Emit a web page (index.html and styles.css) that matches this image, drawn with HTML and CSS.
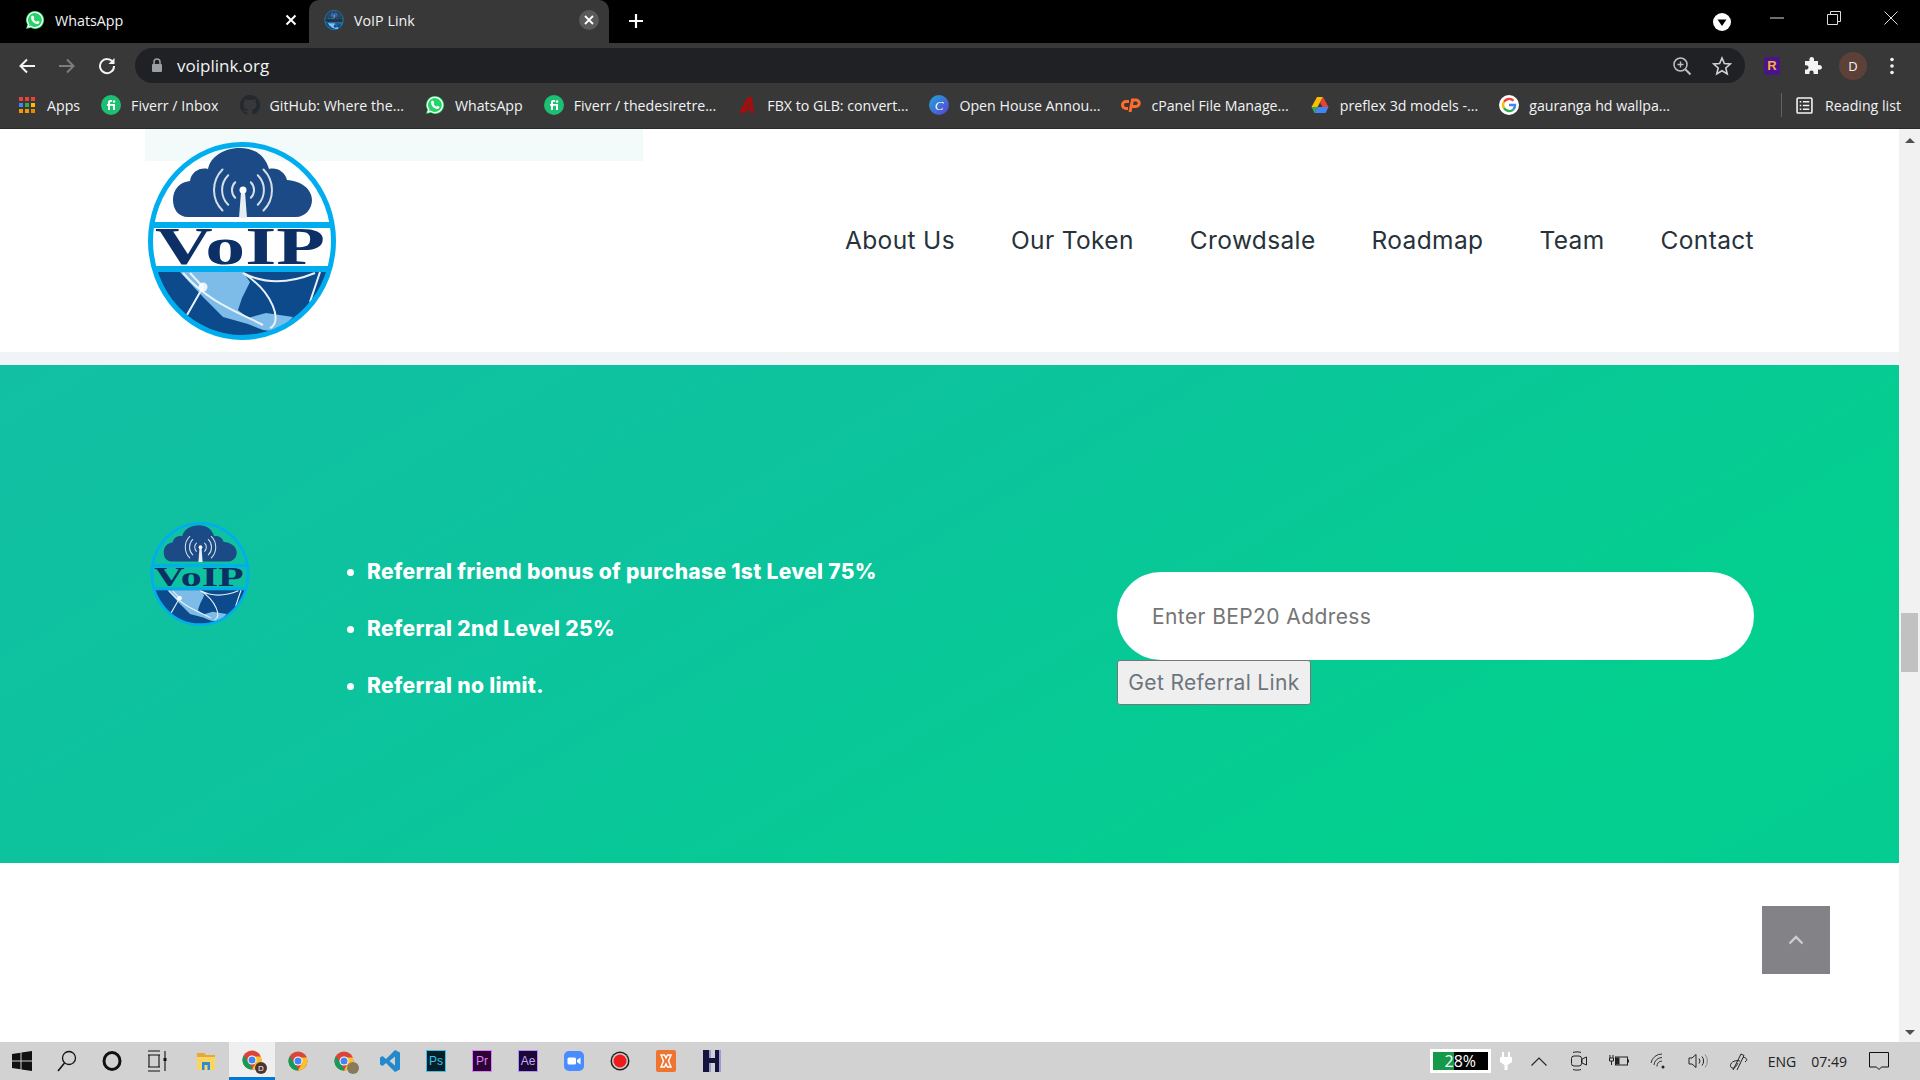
FILE: index.html
```html
<!DOCTYPE html>
<html lang="en">
<head>
  <meta charset="UTF-8">
  <title>VoIP Link</title>
  <link rel="stylesheet" href="styles.css">
</head>
<body>

<svg class="defs" width="0" height="0">
  <defs>
    <clipPath id="logoClip"><ellipse cx="94" cy="99" rx="92" ry="97"/></clipPath>
    <symbol id="logo" viewBox="0 0 188 198">
      <g clip-path="url(#logoClip)">
        <path fill="#1c4a86" d="M40 75C30 75 25 67 25 58C25 47 32 40 42 39C43 30 52 25 60 27C63 13 78 6 92 6C106 6 117 13 121 27C129 25 137 30 139 38C153 39 164 47 164 58C164 67 157 75 148 75Z"/>
        <g fill="none" stroke="#d5dfe9" stroke-width="2" stroke-linecap="round">
          <path d="M87.200 40.200A11 11 0 0 0 87.200 55.800M102.800 40.200A11 11 0 0 1 102.800 55.800"/>
          <path d="M80.200 33.200A21 21 0 0 0 80.200 62.800M109.800 33.200A21 21 0 0 1 109.800 62.800"/>
          <path d="M74.500 27.500A29 29 0 0 0 74.500 68.500M115.500 27.500A29 29 0 0 1 115.500 68.500"/>
        </g>
        <path fill="#e6edf3" d="M93 50L97 50L99 76L91 76Z"/>
        <circle cx="95" cy="48" r="3.500" fill="#fff"/>
        <rect x="0" y="80" width="188" height="6" fill="#00aeef"/>
        <text x="7" y="122" class="logo-text" textLength="170" lengthAdjust="spacingAndGlyphs">VoIP</text>
        <rect x="0" y="124" width="188" height="6" fill="#00aeef"/>
        <rect x="0" y="130" width="188" height="68" fill="#0c4a8c"/>
        <path fill="#7dbce8" d="M32 130L95 130L102 140L94 156L90 168L100 176L118 171L145 175L130 190L115 188L100 182L75 175L55 155Z"/>
        <g fill="none" stroke="#e8f1f8" stroke-width="2">
          <path d="M95 131C125 150 135 180 122 186M35 131C60 160 90 170 115 183M55 145L39 173M42 131L55 145M95 131C120 144 145 140 167 131M172 130L162 160"/>
        </g>
        <circle cx="55" cy="145" r="4.500" fill="#fff" opacity=".85"/>
      </g>
      <ellipse cx="94" cy="99" rx="91.500" ry="96.500" fill="none" stroke="#00aeef" stroke-width="5"/>
    </symbol>
    <symbol id="wa" viewBox="0 0 20 20">
      <path fill="#25d366" d="M10 1A9 9 0 0 0 2.300 14.600L1 19L5.600 17.800A9 9 0 1 0 10 1Z"/>
      <path fill="none" stroke="#fff" stroke-width="1.300" d="M10 2.400A7.600 7.600 0 0 0 3.800 14.400L3 17L5.700 16.300A7.600 7.600 0 1 0 10 2.400Z"/>
      <path fill="#fff" d="M7.300 5.600C6.500 5.800 5.900 6.800 6 8C6.300 10.800 9 13.600 12 14C13.200 14.100 14.200 13.400 14.400 12.500L14.400 11.700L12.500 10.800L11.600 11.800C10.400 11.300 9.200 10.200 8.600 9L9.300 8L8.500 5.900Z"/>
    </symbol>
    <symbol id="fi" viewBox="0 0 20 20">
      <circle cx="10" cy="10" r="10" fill="#1dbf73"/>
      <path fill="#fff" d="M6 9H7V7.500C7 5.800 8 5 9.500 5H11V6.800H10C9.300 6.800 9 7.100 9 7.700V9H14V15H12V10.800H9V15H7V10.800H6Z"/>
      <circle cx="13" cy="6.500" r="1.200" fill="#fff"/>
    </symbol>
    <symbol id="chrome" viewBox="0 0 20 20">
      <circle cx="10" cy="10" r="9.500" fill="#db4437"/>
      <path fill="#0f9d58" d="M10 19.500A9.500 9.500 0 0 1 1.800 5.200L7 13.500L11 19.500Z"/>
      <path fill="#fbc02d" d="M18.800 6.500A9.500 9.500 0 0 1 10 19.500L14 12L10 6.500Z"/>
      <circle cx="10" cy="10" r="4.500" fill="#fff"/>
      <circle cx="10" cy="10" r="3.500" fill="#4285f4"/>
    </symbol>
  </defs>
</svg>

<header class="chrome">
  <div class="tabstrip">
    <div class="tab">
      <svg class="favicon" width="20" height="20"><use href="#wa"/></svg>
      <span class="tab-title">WhatsApp</span>
      <svg class="tab-close" width="12" height="12" viewBox="0 0 12 12"><path d="M1.500 1.500L10.500 10.500M10.500 1.500L1.500 10.500" stroke="#fff" stroke-width="2"/></svg>
    </div>
    <div class="tab tab-active">
      <svg class="favicon" width="20" height="20"><use href="#logo"/></svg>
      <span class="tab-title">VoIP Link</span>
      <span class="tab-close-round">
        <svg width="10" height="10" viewBox="0 0 10 10"><path d="M1 1L9 9M9 1L1 9" stroke="#fff" stroke-width="1.800"/></svg>
      </span>
    </div>
    <svg class="new-tab" width="16" height="16" viewBox="0 0 16 16"><path d="M8 1V15M1 8H15" stroke="#fff" stroke-width="2.200"/></svg>
    <svg class="tab-search" width="18" height="18" viewBox="0 0 18 18"><circle cx="9" cy="9" r="9" fill="#fff"/><path d="M4.500 6.500H13.500L9 13Z" fill="#000"/></svg>
    <div class="window-btns">
      <svg width="14" height="14" viewBox="0 0 14 14"><path d="M0 7H14" stroke="#ddd"/></svg>
      <svg width="14" height="14" viewBox="0 0 14 14"><path d="M.5 3.500H10.500V13.500H.5ZM3.500 3.500V.5H13.500V10.500H10.500" fill="none" stroke="#ddd"/></svg>
      <svg width="14" height="14" viewBox="0 0 14 14"><path d="M.5 .5L13.500 13.500M13.500 .5L.5 13.500" stroke="#ddd"/></svg>
    </div>
  </div>

  <div class="toolbar">
    <svg class="nav-btn" width="18" height="18" viewBox="0 0 18 18"><path d="M17 9H3M9 2.500L2.500 9L9 15.500" fill="none" stroke="#f1f3f4" stroke-width="2"/></svg>
    <svg class="nav-btn" width="18" height="18" viewBox="0 0 18 18"><path d="M1 9H15M9 2.500L15.500 9L9 15.500" fill="none" stroke="#7b7d7f" stroke-width="2"/></svg>
    <svg class="nav-btn" width="18" height="18" viewBox="0 0 18 18"><path d="M15 5.500A7 7 0 1 0 16 9" fill="none" stroke="#f1f3f4" stroke-width="2"/><path d="M16.500 1V7H10.500Z" fill="#f1f3f4"/></svg>
    <div class="omnibox">
      <svg class="lock" width="12" height="15" viewBox="0 0 12 15"><path d="M3 6V4A3 3 0 0 1 9 4V6" fill="none" stroke="#9aa0a6" stroke-width="1.500"/><rect x="1" y="6" width="10" height="8" rx="1" fill="#9aa0a6"/></svg>
      <span class="url">voiplink.org</span>
      <svg class="omni-zoom" width="20" height="20" viewBox="0 0 20 20"><circle cx="8.500" cy="8.500" r="6.500" fill="none" stroke="#bdc1c6" stroke-width="1.500"/><path d="M13.500 13.500L18.500 18.500" stroke="#bdc1c6" stroke-width="2"/><path d="M8.500 5.500V11.500M5.500 8.500H11.500" stroke="#bdc1c6" stroke-width="1.300"/></svg>
      <svg class="omni-star" width="20" height="20" viewBox="0 0 20 20"><path d="M10 2L12.400 7.500L18.300 8L13.800 12L15.200 17.900L10 14.800L4.800 17.900L6.200 12L1.700 8L7.600 7.500Z" fill="none" stroke="#d0d3d6" stroke-width="1.600"/></svg>
    </div>
    <svg class="ext-icon" width="16" height="18" viewBox="0 0 16 18"><rect width="16" height="18" rx="2" fill="#4a148c"/><text x="8" y="13" class="ext-letter">R</text></svg>
    <svg class="puzzle" width="19" height="19" viewBox="0 0 19 19"><path fill="#f1f3f4" d="M2 5H6.500C6 2.500 7 1 8.700 1C10.400 1 11.500 2.500 11 5H15V9C17.500 8.500 19 9.600 19 11.300C19 13 17.500 14 15 13.500V18H10.500C11 15.500 10 14.500 8.500 14.500C7 14.500 6 15.500 6.500 18H2V13.500C4 14 5.500 13 5.500 11.500C5.500 10 4 9 2 9.500Z"/></svg>
    <span class="avatar">D</span>
    <svg class="dots" width="4" height="18" viewBox="0 0 4 18"><circle cx="2" cy="2.500" r="1.800" fill="#f1f3f4"/><circle cx="2" cy="9" r="1.800" fill="#f1f3f4"/><circle cx="2" cy="15.500" r="1.800" fill="#f1f3f4"/></svg>
  </div>

  <nav class="bookmarks">
    <a class="bm">
      <svg width="20" height="20" viewBox="0 0 20 20">
        <g fill="#ea4335"><rect x="2" y="2" width="4" height="4"/><rect x="8" y="2" width="4" height="4"/><rect x="14" y="2" width="4" height="4"/></g>
        <g fill="#4285f4"><rect x="2" y="8" width="4" height="4"/></g>
        <g fill="#34a853"><rect x="8" y="8" width="4" height="4"/></g>
        <g fill="#fbbc05"><rect x="14" y="8" width="4" height="4"/></g>
        <g fill="#f29900"><rect x="2" y="14" width="4" height="4"/><rect x="8" y="14" width="4" height="4"/></g>
        <g fill="#ea8600"><rect x="14" y="14" width="4" height="4"/></g>
      </svg>
      <span>Apps</span>
    </a>
    <a class="bm"><svg width="20" height="20"><use href="#fi"/></svg><span>Fiverr / Inbox</span></a>
    <a class="bm">
      <svg width="20" height="20" viewBox="0 0 20 20"><path fill="#24292e" d="M10 0A10 10 0 0 0 6.800 19.500C7.300 19.600 7.500 19.300 7.500 19V17.200C4.700 17.800 4.100 16 4.100 16C3.600 14.800 3 14.500 3 14.500C2.100 13.900 3.100 13.900 3.100 13.900C4.100 14 4.600 15 4.600 15C5.500 16.500 7 16.100 7.500 15.800C7.600 15.200 7.900 14.700 8.100 14.500C5.900 14.200 3.600 13.400 3.600 9.500C3.600 8.400 4 7.500 4.600 6.800C4.500 6.500 4.200 5.500 4.700 4.100C4.700 4.100 5.500 3.800 7.500 5.200A9.500 9.500 0 0 1 12.500 5.200C14.500 3.800 15.300 4.100 15.300 4.100C15.800 5.500 15.500 6.500 15.400 6.800C16 7.500 16.400 8.400 16.400 9.500C16.400 13.400 14.100 14.200 11.900 14.500C12.200 14.800 12.500 15.400 12.500 16.300V19C12.500 19.300 12.700 19.600 13.200 19.500A10 10 0 0 0 10 0Z"/></svg>
      <span>GitHub: Where the...</span>
    </a>
    <a class="bm"><svg width="20" height="20"><use href="#wa"/></svg><span>WhatsApp</span></a>
    <a class="bm"><svg width="20" height="20"><use href="#fi"/></svg><span>Fiverr / thedesiretre...</span></a>
    <a class="bm">
      <svg width="20" height="20" viewBox="0 0 20 20"><path fill="#a80d0d" d="M11 2H15L17 18H13.500L13.200 15H10L8.500 18H2L11 2ZM12.900 12.500L12.500 7L10.800 12.500Z"/></svg>
      <span>FBX to GLB: convert...</span>
    </a>
    <a class="bm">
      <svg width="20" height="20" viewBox="0 0 20 20"><defs><linearGradient id="canva" x1="0" y1="0" x2="1" y2="1"><stop offset="0" stop-color="#1fa8d8"/><stop offset="1" stop-color="#5b3fd6"/></linearGradient></defs><circle cx="10" cy="10" r="10" fill="url(#canva)"/><text x="10" y="14.500" class="canva-letter">C</text></svg>
      <span>Open House Annou...</span>
    </a>
    <a class="bm">
      <svg width="20" height="20" viewBox="0 0 20 20"><path fill="none" stroke="#ff6c2c" stroke-width="3" d="M8 6.500H5A3.500 3.500 0 0 0 5 13.500H7M9 17L11.500 5H15A3.200 3.200 0 0 1 15 11.500H11.500"/></svg>
      <span>cPanel File Manage...</span>
    </a>
    <a class="bm">
      <svg width="20" height="20" viewBox="0 0 20 20"><path fill="#fbbc04" d="M7 2H13L7.500 12H1.500Z"/><path fill="#34a853" d="M1.500 12H7.500L4.500 18Z"/><path fill="#ea4335" d="M13 2L18.500 12H12.500L10 7.500Z"/><path fill="#4285f4" d="M7.500 12H18.500L15.500 18H4.500Z"/></svg>
      <span>preflex 3d models -...</span>
    </a>
    <a class="bm">
      <svg width="20" height="20" viewBox="0 0 20 20"><circle cx="10" cy="10" r="10" fill="#fff"/><path fill="none" stroke="#ea4335" stroke-width="2.400" d="M14.500 5.800A6 6 0 0 0 5 6.800"/><path fill="none" stroke="#fbbc05" stroke-width="2.400" d="M5 6.800A6 6 0 0 0 5 13.200"/><path fill="none" stroke="#34a853" stroke-width="2.400" d="M5 13.200A6 6 0 0 0 14.500 14.200"/><path fill="none" stroke="#4285f4" stroke-width="2.400" d="M14.500 14.200A6 6 0 0 0 16 10H10"/></svg>
      <span>gauranga hd wallpa...</span>
    </a>
    <a class="bm bm-reading">
      <svg width="17" height="17" viewBox="0 0 16 16"><rect x="1" y="1" width="14" height="14" rx="1" fill="none" stroke="#f1f3f4" stroke-width="1.500"/><path d="M3.500 4.500H5M3.500 8H5M3.500 11.500H5M6.500 4.500H12.500M6.500 8H12.500M6.500 11.500H12.500" stroke="#f1f3f4" stroke-width="1.300"/></svg>
      <span>Reading list</span>
    </a>
  </nav>
</header>

<div class="viewport">
  <main class="page">
    <div class="site-header">
      <div class="header-tint"></div>
      <svg class="logo-main"><use href="#logo"/></svg>
      <ul class="site-nav">
        <li>About Us</li>
        <li>Our Token</li>
        <li>Crowdsale</li>
        <li>Roadmap</li>
        <li>Team</li>
        <li>Contact</li>
      </ul>
    </div>
    <div class="header-shadow"></div>

    <section class="referral">
      <svg class="logo-small"><use href="#logo"/></svg>
      <ul class="bonus-list">
        <li>Referral friend bonus of purchase 1st Level 75%</li>
        <li>Referral 2nd Level 25%</li>
        <li>Referral no limit.</li>
      </ul>
      <form class="referral-form">
        <input class="address" type="text" placeholder="Enter BEP20 Address">
        <button class="get-link" type="button">Get Referral Link</button>
      </form>
    </section>

    <a class="to-top">
      <svg width="16" height="10" viewBox="0 0 16 10"><path d="M1.500 8.500L8 2L14.500 8.500" fill="none" stroke="#c9ced2" stroke-width="2.400"/></svg>
    </a>
  </main>

  <aside class="scrollbar">
    <span class="arrow-up"></span>
    <span class="thumb"></span>
    <span class="arrow-down"></span>
  </aside>
</div>

<footer class="taskbar">
  <div class="task-icons">
    <span class="task task-start"><svg width="20" height="20" viewBox="0 0 20 20"><path fill="#111" d="M0 3L8.500 1.800V9.500H0ZM9.500 1.600L20 0V9.500H9.500ZM0 10.500H8.500V18.200L0 17ZM9.500 10.500H20V20L9.500 18.400Z"/></svg></span>
    <span class="task"><svg width="20" height="22" viewBox="0 0 20 22"><circle cx="12" cy="8" r="6.500" fill="none" stroke="#111" stroke-width="1.300"/><path d="M7.500 13L1 21" stroke="#111" stroke-width="1.500"/></svg></span>
    <span class="task task-cortana"><svg width="20" height="20" viewBox="0 0 20 20"><ellipse cx="10" cy="10" rx="8" ry="8.500" fill="none" stroke="#111" stroke-width="3"/></svg></span>
    <span class="task task-view"><svg width="20" height="22" viewBox="0 0 20 22"><path d="M1 1H13M1 5H13M1 17H13M1 21H13M2 5V17M12 5V17M18 1V21" fill="none" stroke="#111" stroke-width="1.100"/><rect x="16.500" y="8" width="3" height="3" fill="#111"/></svg></span>
    <span class="task task-files"><svg width="20" height="20" viewBox="0 0 20 20"><path fill="#e8a932" d="M1 2H8L10 4H19V8H1Z"/><path fill="#fcd462" d="M1 6H19V19H1Z"/><path fill="#2a8dd4" d="M6 11H14V19H11.500V14H8.500V19H6Z"/></svg></span>
    <span class="task task-active"><svg width="20" height="20" viewBox="0 0 20 20"><use href="#chrome"/></svg><span class="task-badge">D</span></span>
    <span class="task"><svg width="20" height="20" viewBox="0 0 20 20"><use href="#chrome"/></svg></span>
    <span class="task"><svg width="20" height="20" viewBox="0 0 20 20"><use href="#chrome"/></svg><span class="task-badge task-badge-photo"></span></span>
    <span class="task"><svg width="20" height="22" viewBox="0 0 20 22"><path fill="#2489ca" d="M15 0L20 2.500V19.500L15 22L6 13L2.500 16L0 14.500V7.500L2.500 6L6 9ZM15 6.500L9.500 11L15 15.500Z"/></svg></span>
    <span class="task"><span class="app-tile app-ps">Ps</span></span>
    <span class="task"><span class="app-tile app-pr">Pr</span></span>
    <span class="task"><span class="app-tile app-ae">Ae</span></span>
    <span class="task"><svg width="20" height="20" viewBox="0 0 20 20"><rect width="20" height="20" rx="5" fill="#4a8cff"/><rect x="3.500" y="6.500" width="8.500" height="7" rx="1.500" fill="#fff"/><path d="M13 9L16.500 6.500V13.500L13 11Z" fill="#fff"/></svg></span>
    <span class="task"><svg width="20" height="20" viewBox="0 0 20 20"><circle cx="10" cy="10" r="9.500" fill="#222"/><circle cx="10" cy="10" r="8" fill="#ccc"/><circle cx="10" cy="10" r="6.500" fill="#f01a1a"/></svg></span>
    <span class="task"><svg width="20" height="22" viewBox="0 0 20 22"><rect width="20" height="22" rx="2" fill="#ee7430"/><path d="M5 5H8.500L10 8L11.500 5H15L12.500 11L15 17H11.500L10 14L8.500 17H5L7.500 11Z" fill="none" stroke="#fff" stroke-width="1.500"/></svg></span>
    <span class="task"><svg width="20" height="22" viewBox="0 0 20 22"><path fill="#14143c" d="M1 0H7V8H13V0H19V22H13V13H7V22H1Z"/><path fill="#9a9ad0" d="M7 0H9V8H7ZM17 0H19V22H17ZM7 13H9V22H7Z"/></svg></span>
  </div>
  <div class="tray">
    <span class="battery-meter"><span class="battery-fill"></span><span class="battery-pct">28%</span></span>
    <svg class="tray-plug" width="12" height="18" viewBox="0 0 12 18"><path fill="#fff" d="M2 0H4V5H8V0H10V5H12V10L7.500 13V18H4.500V13L0 10V5H2Z"/></svg>
    <svg class="tray-caret" width="16" height="9" viewBox="0 0 16 9"><path d="M.5 8.500L8 1L15.500 8.500" fill="none" stroke="#222" stroke-width="1.100"/></svg>
    <svg class="tray-meet" width="16" height="20" viewBox="0 0 16 20"><path d="M2 1.500C4 .7 8 .7 10 1.500M2 18.500C4 19.300 8 19.300 10 18.500" fill="none" stroke="#222"/><rect x=".5" y="5" width="10" height="10" rx="2.500" fill="none" stroke="#222"/><path d="M11 8L15.500 6V14L11 12Z" fill="none" stroke="#222"/></svg>
    <svg class="tray-power" width="20" height="14" viewBox="0 0 20 14"><path d="M1 1V4M4 1V4M.5 4H4.500V7H.5ZM2.500 7V11" fill="none" stroke="#222"/><rect x="6.500" y="3" width="12" height="8" fill="none" stroke="#222"/><rect x="7" y="3.500" width="3.500" height="7" fill="#222"/><rect x="18.500" y="5.500" width="1.500" height="3" fill="#222"/></svg>
    <svg class="tray-wifi" width="18" height="16" viewBox="0 0 18 16"><path d="M1 10A11 11 0 0 1 12 1M4 12A8 8 0 0 1 12 4.500M7 13.500A5 5 0 0 1 12 8" fill="none" stroke="#333"/><circle cx="13" cy="14" r="1.500" fill="#222"/></svg>
    <svg class="tray-volume" width="20" height="16" viewBox="0 0 20 16"><path d="M1 5H4L8 1.500V14.500L4 11H1Z" fill="none" stroke="#222"/><path d="M11 5.500A4 4 0 0 1 11 10.500M14 3.500A7 7 0 0 1 14 12.500" fill="none" stroke="#222"/><path d="M17 1.500A10 10 0 0 1 17 14.500" fill="none" stroke="#888"/></svg>
    <svg class="tray-pen" width="20" height="20" viewBox="0 0 20 20"><path d="M4 19L12 3L15 4.500L8 19M14 6C18 7 19 9 16 11M11 10C3 8 -1 15 3 17C6 18 8 14 9 12" fill="none" stroke="#222"/></svg>
    <span class="tray-lang">ENG</span>
    <span class="tray-clock">07:49</span>
    <svg class="tray-note" width="20" height="20" viewBox="0 0 20 20"><path d="M.5 1.500H19.500V16H12.500L10 18.500L7.500 16H.5Z" fill="none" stroke="#111"/></svg>
  </div>
</footer>

</body>
</html>
```

FILE: styles.css
```css
* {
  box-sizing: border-box;
}

body {
  margin: 0;
  height: 100vh;
  display: flex;
  flex-direction: column;
  overflow: hidden;
  font-family: "Open Sans", sans-serif;
  background: #fff;
}

.defs {
  position: absolute;
}

.logo-text {
  font-family: "Liberation Serif", serif;
  font-weight: bold;
  font-size: 52px;
  fill: #0c2f66;
}

/* browser frame */
.chrome {
  flex: none;
  background: #383838;
  color: #f1f3f4;
  border-bottom: 1px solid #2a2a2a;
}

.tabstrip {
  height: 43px;
  background: #000;
  display: flex;
  align-items: center;
  position: relative;
}

.tab {
  width: 309px;
  height: 43px;
  padding: 0 12px 3px 25px;
  display: flex;
  align-items: center;
  gap: 10px;
}

.tab-active {
  width: 300px;
  background: #383838;
  border-radius: 10px 10px 0 0;
  padding: 0 10px 3px 15px;
}

.tab-title {
  font-size: 14.3px;
  flex: 1;
}

.tab-close-round {
  width: 20px;
  height: 20px;
  border-radius: 50%;
  background: #5a5a5a;
  display: flex;
  align-items: center;
  justify-content: center;
}

.new-tab {
  margin-left: 19px;
  margin-bottom: 1px;
}

.tab-search {
  position: absolute;
  left: 1713px;
  top: 13px;
}

.window-btns {
  margin-left: auto;
  margin-right: 22px;
  margin-bottom: 8px;
  display: flex;
  gap: 43px;
}

.toolbar {
  height: 45px;
  padding: 5px 0 5px 18px;
  display: flex;
  align-items: center;
}

.nav-btn {
  margin-right: 22px;
}

.nav-btn:nth-child(3) {
  margin-right: 19px;
}

.omnibox {
  width: 1610px;
  height: 35px;
  background: #202124;
  border-radius: 18px;
  display: flex;
  align-items: center;
  padding: 0 13px 0 16px;
}

.url {
  margin-left: 14px;
  font-size: 17px;
  flex: 1;
}

.omni-star {
  margin-left: 20px;
}

.ext-icon {
  margin-left: 19px;
}

.ext-letter {
  font-family: "Liberation Sans", sans-serif;
  font-weight: bold;
  font-size: 13px;
  text-anchor: middle;
  fill: #fbb03b;
}

.puzzle {
  margin-left: 23px;
}

.avatar {
  margin-left: 17px;
  width: 28px;
  height: 28px;
  border-radius: 50%;
  background: #5d4037;
  font-size: 13px;
  display: flex;
  align-items: center;
  justify-content: center;
}

.dots {
  margin-left: 23px;
}

.bookmarks {
  height: 40px;
  padding-left: 17px;
  padding-bottom: 6px;
  display: flex;
  align-items: center;
  gap: 21px;
  font-size: 14.2px;
}

.bm {
  display: flex;
  align-items: center;
  gap: 10px;
  white-space: nowrap;
}

.bm-reading {
  margin-left: auto;
  margin-right: 19px;
  padding-left: 14px;
  gap: 12px;
  border-left: 1px solid #5f6368;
  height: 24px;
}

.canva-letter {
  font-family: "Liberation Serif", serif;
  font-style: italic;
  font-size: 13px;
  text-anchor: middle;
  fill: #fff;
}

/* page */
.viewport {
  flex: 1;
  display: flex;
  min-height: 0;
}

.page {
  flex: 1;
  position: relative;
  font-family: Inter, sans-serif;
  overflow: hidden;
}

.site-header {
  height: 223px;
  padding: 0 145px 0 148px;
  display: flex;
  align-items: center;
  justify-content: space-between;
  position: relative;
}

.header-tint {
  position: absolute;
  left: 145px;
  top: 0;
  width: 498px;
  height: 32px;
  background: #f2fbfa;
}

.logo-main {
  width: 188px;
  height: 198px;
  position: relative;
}

.site-nav {
  list-style: none;
  margin: 0;
  padding: 0 0 2px;
  display: flex;
  gap: 56px;
  font-size: 24.5px;
  letter-spacing: .36px;
  color: #27323a;
}

.header-shadow {
  height: 13px;
  background: #f1f4f7;
}

.referral {
  height: 498px;
  padding: 157px 145px 0 150px;
  display: flex;
  align-items: flex-start;
  background: linear-gradient(150deg, #12bfa3 0%, #0bc49c 40%, #03cf8e 80%, #05cc92 100%);
}

.logo-small {
  width: 100px;
  height: 104px;
  flex: none;
}

.bonus-list {
  margin: 37px 0 0 0;
  padding: 0 0 0 117px;
  width: 867px;
  flex: none;
  color: #fff;
  font-size: 21px;
  font-weight: 800;
  letter-spacing: .33px;
}

.bonus-list li {
  height: 57px;
}

.referral-form {
  flex: 1;
  padding-top: 50px;
}

.address {
  display: block;
  width: 100%;
  height: 88px;
  padding: 0 35px;
  border: 0;
  border-radius: 44px;
  background: #fff;
  font: 21px Inter, sans-serif;
  letter-spacing: .4px;
}

.address::placeholder {
  color: #757575;
}

.get-link {
  display: block;
  height: 45px;
  width: 194px;
  padding: 0;
  background: #efefef;
  border: 1px solid #767676;
  border-radius: 3px;
  color: #6c757d;
  font: 21px Inter, sans-serif;
  letter-spacing: .35px;
}

.to-top {
  position: absolute;
  left: 1762px;
  top: 777px;
  width: 68px;
  height: 68px;
  background: #838387;
  display: flex;
  align-items: center;
  justify-content: center;
}

.scrollbar {
  width: 21px;
  flex: none;
  background: #f1f1f1;
  position: relative;
}

.arrow-up,
.arrow-down {
  position: absolute;
  left: 6px;
  border-left: 5px solid transparent;
  border-right: 5px solid transparent;
}

.arrow-up {
  top: 9px;
  border-bottom: 5px solid #505050;
}

.arrow-down {
  bottom: 7px;
  border-top: 5px solid #505050;
}

.thumb {
  position: absolute;
  left: 2px;
  top: 484px;
  width: 17px;
  height: 59px;
  background: #c1c1c1;
}

/* windows taskbar */
.taskbar {
  flex: none;
  height: 38px;
  background: #d2d2d2;
  display: flex;
  align-items: center;
  justify-content: space-between;
}

.task-icons {
  display: flex;
  height: 100%;
}

.task {
  width: 46px;
  height: 100%;
  display: flex;
  align-items: center;
  justify-content: center;
  position: relative;
}

.task-start {
  width: 44px;
}

.task-cortana {
  width: 44px;
}

.task-view {
  width: 45px;
}

.task-files {
  margin-left: 4px;
}

.task-active {
  background: #efefef;
  border-bottom: 3px solid #0078d4;
}

.task-badge {
  position: absolute;
  left: 26px;
  top: 20px;
  width: 12px;
  height: 12px;
  border-radius: 50%;
  background: #4e342e;
  color: #fff;
  font-size: 8px;
  text-align: center;
  line-height: 12px;
}

.task-badge-photo {
  background: #8a7a5c;
}

.app-tile {
  width: 20px;
  height: 22px;
  font-size: 12px;
  display: flex;
  align-items: center;
  justify-content: center;
  font-family: "Liberation Sans", sans-serif;
}

.app-ps {
  background: #061e26;
  border: 1px solid #31c5f0;
  color: #31c5f0;
}

.app-pr {
  background: #2a0634;
  border: 1px solid #e579ff;
  color: #e579ff;
}

.app-ae {
  background: #1a0a33;
  border: 1px solid #b48cff;
  color: #c9a6ff;
}

.tray {
  display: flex;
  align-items: center;
  height: 100%;
  padding-right: 31px;
  color: #222;
}

.battery-meter {
  width: 61px;
  height: 24px;
  border: 3px solid #fff;
  background: #000;
  position: relative;
  display: block;
}

.battery-fill {
  position: absolute;
  left: 0;
  top: 0;
  bottom: 0;
  width: 38%;
  background: #149a48;
}

.battery-pct {
  position: relative;
  display: block;
  text-align: center;
  color: #fff;
  font-size: 16px;
  line-height: 18px;
}

.tray-plug {
  margin-left: 9px;
}

.tray-caret {
  margin-left: 19px;
}

.tray-meet {
  margin-left: 24px;
}

.tray-power {
  margin-left: 22px;
}

.tray-wifi {
  margin-left: 21px;
}

.tray-volume {
  margin-left: 20px;
}

.tray-pen {
  margin-left: 21px;
}

.tray-lang {
  margin-left: 19px;
  font-size: 14px;
}

.tray-clock {
  margin-left: 15px;
  font-size: 14px;
}

.tray-note {
  margin-left: 22px;
}
```
